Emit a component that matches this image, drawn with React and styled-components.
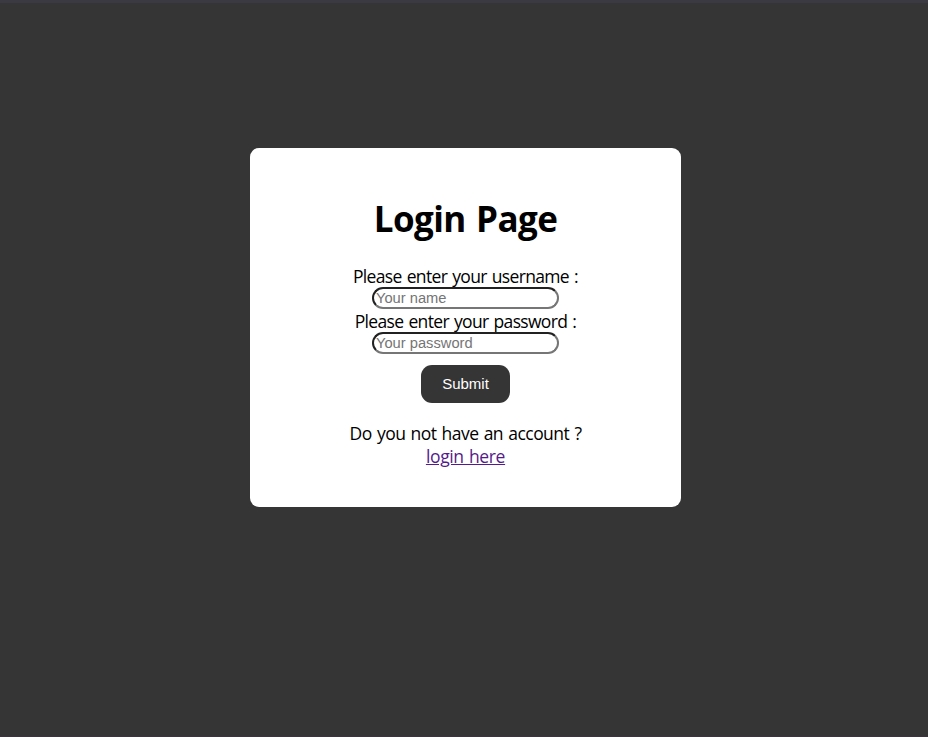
import React from "react";
import styled, { createGlobalStyle } from "styled-components";

const GlobalStyle = createGlobalStyle`
  * { box-sizing: border-box; }
  body { margin: 0; background: #353535; }
`;

const Page = styled.main`
  height: 737px;
  padding-top: 145px;
  border-top: 3px solid #3b3a42;
  border-bottom: 1px solid #3b343a;
  background: #353535;
  font: 17.5px/23px "Open Sans", "Noto Sans", sans-serif;
  color: #000;
`;

const Card = styled.form`
  display: flex;
  flex-direction: column;
  align-items: center;
  width: 431px;
  height: 359px;
  margin-left: 250px;
  padding-top: 46px;
  border-radius: 9px;
  background: #fff;
`;

const Title = styled.h1`
  margin: 0 0 22px;
  font: 700 35px/49px "Open Sans", "Noto Sans", sans-serif;
  letter-spacing: -0.6px;
  word-spacing: 2px;
  white-space: nowrap;
`;

const Label = styled.label`
  height: 22px;
  line-height: 23px;
  letter-spacing: -0.67px;
  word-spacing: 1.2px;
  white-space: nowrap;
`;

const Input = styled.input`
  width: 187px;
  height: 22px;
  margin-bottom: 1px;
  padding: 0 2px 1px;
  border: 2px inset #767676;
  border-radius: 11px;
  background: #fff;
  font: 14.7px/17px "Liberation Sans", Arial, sans-serif;
  &::placeholder { color: #757575; }
`;

const Submit = styled.button`
  width: 89px;
  height: 38px;
  margin: 10px 0 19px;
  padding: 0 0 2px;
  border: 0;
  border-radius: 11px;
  background: #353535;
  color: #fff;
  font: 15px "Liberation Sans", Arial, sans-serif;
`;

const Prompt = styled.p`
  margin: 0;
  letter-spacing: -0.54px;
  word-spacing: 1.2px;
  white-space: nowrap;
`;

const Link = styled.a`
  color: #551a8b;
  letter-spacing: -0.35px;
  word-spacing: 1px;
  text-decoration: underline;
`;

export default function App() {
  return (
    <>
      <GlobalStyle />
      <Page>
        <Card onSubmit={(e) => e.preventDefault()}>
          <Title>Login Page</Title>
          <Label htmlFor="name">Please enter your username :</Label>
          <Input id="name" placeholder="Your name" />
          <Label htmlFor="password">Please enter your password :</Label>
          <Input id="password" type="password" placeholder="Your password" />
          <Submit>Submit</Submit>
          <Prompt>Do you not have an account ?</Prompt>
          <Link href="#">login here</Link>
        </Card>
      </Page>
    </>
  );
}
